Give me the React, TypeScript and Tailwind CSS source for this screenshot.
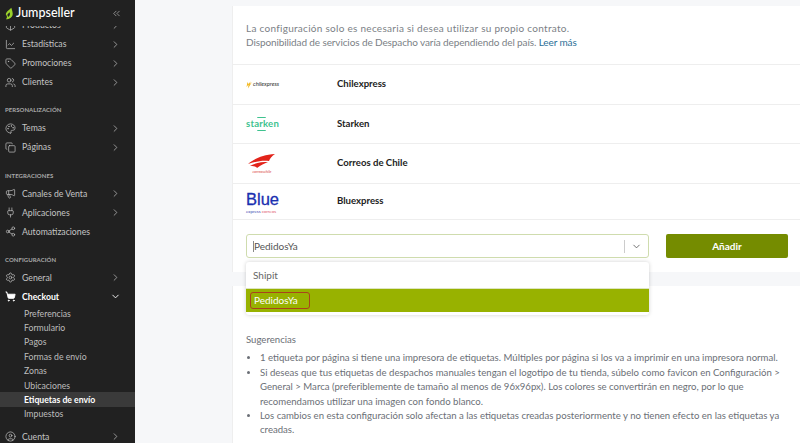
import { ChevronDown, ChevronRight, ChevronsLeft, LineChart, Tag, Users, Palette, Copy, Megaphone, Plug, Share2, Settings, ShoppingCart, CircleUser, Package } from "lucide-react";
import type { ReactNode } from "react";

const font = "font-['Lato','Liberation_Sans',sans-serif]";

function Row({ icon, label, chevron = "right", active = false }: { icon: ReactNode; label: string; chevron?: "right" | "down" | "none"; active?: boolean }) {
  return (
    <div className={`flex h-[19px] shrink-0 items-center pl-[2px] pr-[14px] ${active ? "text-white" : "text-[#c4c4c4]"}`}>
      <span className="flex w-[17px] justify-center">{icon}</span>
      <span className={`ml-[3px] flex-1 text-[8.7px] ${active ? "font-bold" : ""}`}>{label}</span>
      {chevron === "right" && <ChevronRight size={11} strokeWidth={1.6} className="text-[#bdbdbd]" />}
      {chevron === "down" && <ChevronDown size={11} strokeWidth={2} className="text-white" />}
    </div>
  );
}

function Section({ label, top, bottom }: { label: string; top: string; bottom: string }) {
  return <div className={`flex h-[10px] items-center pl-[5px] text-[6px] font-bold tracking-[0.05px] text-[#a8a8a8] ${top} ${bottom}`}>{label}</div>;
}

function Sub({ label, active = false }: { label: string; active?: boolean }) {
  return <div className={`flex h-[14.4px] shrink-0 items-center pl-[24px] text-[8.7px] ${active ? "bg-[#3a3a3a] font-bold text-white" : "text-[#bdbdbd]"}`}>{label}</div>;
}

function Sidebar() {
  const ic = { size: 11, strokeWidth: 1.5 };
  return (
    <aside className="flex h-[443px] w-[135px] shrink-0 flex-col overflow-hidden bg-[#212121]">
      <header className="relative z-10 flex h-[26px] shrink-0 items-center bg-[#212121] pl-[5px] pr-[13px]">
        <svg width="9" height="13" viewBox="0 0 10 13">
          <path d="M7 0 C8 3 9 6 8.5 8 C8 11 5 13 1 13 C3 11 2 9 1 8 C0.5 5 4 3 7 0Z" fill="#9ad12b" />
          <path d="M5 5 C6 7 5.5 9 3.5 10.5 L2.5 8 Z" fill="#212121" />
        </svg>
        <span className="ml-[2px] flex-1 text-[12.5px] font-medium text-white">Jumpseller</span>
        <ChevronsLeft size={11} strokeWidth={1.4} className="text-[#c4c4c4]" />
      </header>
      <nav className="flex flex-col">
        <div className="mt-[-10.5px]">
          <Row icon={<Package {...ic} />} label="Productos" />
        </div>
        <Row icon={<LineChart {...ic} />} label="Estadísticas" />
        <Row icon={<Tag {...ic} />} label="Promociones" />
        <Row icon={<Users {...ic} />} label="Clientes" />
        <Section label="PERSONALIZACIÓN" top="mt-[13px]" bottom="mb-[4px]" />
        <Row icon={<Palette {...ic} />} label="Temas" />
        <Row icon={<Copy {...ic} />} label="Páginas" />
        <Section label="INTEGRACIONES" top="mt-[13.5px]" bottom="mb-[4px]" />
        <Row icon={<Megaphone {...ic} />} label="Canales de Venta" />
        <Row icon={<Plug {...ic} />} label="Aplicaciones" />
        <Row icon={<Share2 {...ic} />} label="Automatizaciones" chevron="none" />
        <Section label="CONFIGURACIÓN" top="mt-[13px]" bottom="mb-[4px]" />
        <Row icon={<Settings {...ic} />} label="General" />
        <Row icon={<ShoppingCart size={11} strokeWidth={2} fill="white" />} label="Checkout" chevron="down" active />
        <div className="flex flex-col">
          <Sub label="Preferencias" />
          <Sub label="Formulario" />
          <Sub label="Pagos" />
          <Sub label="Formas de envío" />
          <Sub label="Zonas" />
          <Sub label="Ubicaciones" />
          <Sub label="Etiquetas de envío" active />
          <Sub label="Impuestos" />
        </div>
        <div className="mt-[6px]">
          <Row icon={<CircleUser {...ic} />} label="Cuenta" />
        </div>
      </nav>
    </aside>
  );
}

function Chilexpress() {
  return (
    <div className="flex items-center">
      <svg width="7" height="8" viewBox="0 0 7 8">
        <path d="M1.5 1 L0.5 6 L2.5 3.5 L2 7.5 L6 1 L4 3 L4.5 0.5 L2.5 3 Z" fill="#f2b821" />
      </svg>
      <span className="text-[5.8px] italic text-[#333]">chilexpress</span>
    </div>
  );
}

function Starken() {
  return (
    <span className="relative text-[9.6px] font-bold leading-none tracking-[0.2px] text-[#3fc28f]">
      starken
      <span className="absolute left-[11px] top-[-2px] h-[14px] w-[9px] rounded-[1px] border-y border-[#3fc28f]" />
    </span>
  );
}

function Correos() {
  return (
    <div className="flex flex-col items-center pl-[2px]">
      <svg width="28" height="15" viewBox="0 0 28 15">
        <path d="M0 10 C6 5 14 1 27 0 C24 2 22 4 21 7 C14 6 6 8 0 10Z" fill="#e2231a" />
        <path d="M2 12 C8 8.5 14 8 20 8 C16 9.5 13 11 9 14 C8 12.5 6 12 2 12Z" fill="#e2231a" />
      </svg>
      <span className="mt-[1px] text-[3.8px] italic leading-none text-[#d9413a]">correoschile</span>
    </div>
  );
}

function Blue() {
  return (
    <div className="flex flex-col items-start">
      <span className="font-['Liberation_Sans',sans-serif] text-[16.5px] leading-[19px] text-[#1a2fb0] [-webkit-text-stroke:0.3px_#1a2fb0]">Blue</span>
      <span className="text-[4.4px] leading-[5px] text-[#3b4ab0]">express <span className="text-[#e0566b]">correos</span></span>
    </div>
  );
}

function Carrier({ logo, name, h }: { logo: ReactNode; name: string; h: string }) {
  return (
    <div className={`flex items-center border-t border-[#eeeeee] pl-[13px] ${h}`}>
      <div className="flex w-[91px] items-center">{logo}</div>
      <span className="text-[9.6px] font-bold text-[#222]">{name}</span>
    </div>
  );
}

export default function App() {
  return (
    <div className={`flex h-[443px] w-[800px] overflow-hidden bg-[#f6f7f9] ${font}`}>
      <Sidebar />
      <main className="flex flex-1 flex-col pl-[97px] pt-[6px]">
        <section className="relative h-[266px] shrink-0 border-l border-[#eeeeee] bg-white">
          <div className="h-[58px] pl-[13px] pt-[15px] text-[10px] leading-[14.4px] text-[#7b7f86]">
            <p className="tracking-[0.28px]">La configuración solo es necesaria si desea utilizar su propio contrato.</p>
            <p className="tracking-[-0.11px]">
              Disponibilidad de servicios de Despacho varía dependiendo del país. <span className="text-[#2a6f97]">Leer más</span>
            </p>
          </div>
          <Carrier logo={<Chilexpress />} name="Chilexpress" h="h-[40px]" />
          <Carrier logo={<Starken />} name="Starken" h="h-[39px]" />
          <Carrier logo={<Correos />} name="Correos de Chile" h="h-[40px]" />
          <Carrier logo={<Blue />} name="Bluexpress" h="h-[36px]" />
          <div className="flex border-t border-[#eeeeee] pl-[13px] pr-[12px] pt-[14px]">
            <div className="flex h-[24px] w-[403px] items-center rounded-[3px] border border-[#cfdcae] bg-white pl-[6px] pr-[6px] text-[10px] text-[#555]">
              <span className="flex-1 border-l border-[#888] leading-[11px]">PedidosYa</span>
              <span className="h-[13px] border-l border-[#cccccc]" />
              <ChevronDown size={11} strokeWidth={1.8} className="ml-[6px] text-[#555]" />
            </div>
            <button className="ml-[17px] h-[24px] flex-1 rounded-[2px] bg-[#758c00] text-[10px] font-bold text-white">Añadir</button>
          </div>
          <div className="absolute left-[13px] top-[256px] z-10 h-[53px] w-[403px] overflow-hidden rounded-[3px] bg-white shadow-[0_0_4px_rgba(0,0,0,0.18)]">
            <div className="flex h-[26px] items-center pl-[7px] text-[10px] text-[#666]">Shipit</div>
            <div className="flex h-[24px] items-center border-t border-[#dde5c0] bg-[#98b200] pl-[4px] text-[10px] text-white">
              <span className="rounded-[3px] border border-[#a9431c] py-[2px] pl-[3px] pr-[11px] leading-[11px]">PedidosYa</span>
            </div>
          </div>
        </section>
        <section className="mt-[14px] flex-1 border-l border-[#eeeeee] bg-white pl-[13px] pr-[10px] pt-[47px] text-[9.6px] leading-[14.4px] text-[#6b6f76]">
          <p>Sugerencias</p>
          <ul className="mt-[4px] list-disc pl-[14px]">
            <li>1 etiqueta por página si tiene una impresora de etiquetas. Múltiples por página si los va a imprimir en una impresora normal.</li>
            <li>Si deseas que tus etiquetas de despachos manuales tengan el logotipo de tu tienda, súbelo como favicon en Configuración &gt; General &gt; Marca (preferiblemente de tamaño al menos de 96x96px). Los colores se convertirán en negro, por lo que recomendamos utilizar una imagen con fondo blanco.</li>
            <li>Los cambios en esta configuración solo afectan a las etiquetas creadas posteriormente y no tienen efecto en las etiquetas ya creadas.</li>
          </ul>
        </section>
      </main>
    </div>
  );
}
